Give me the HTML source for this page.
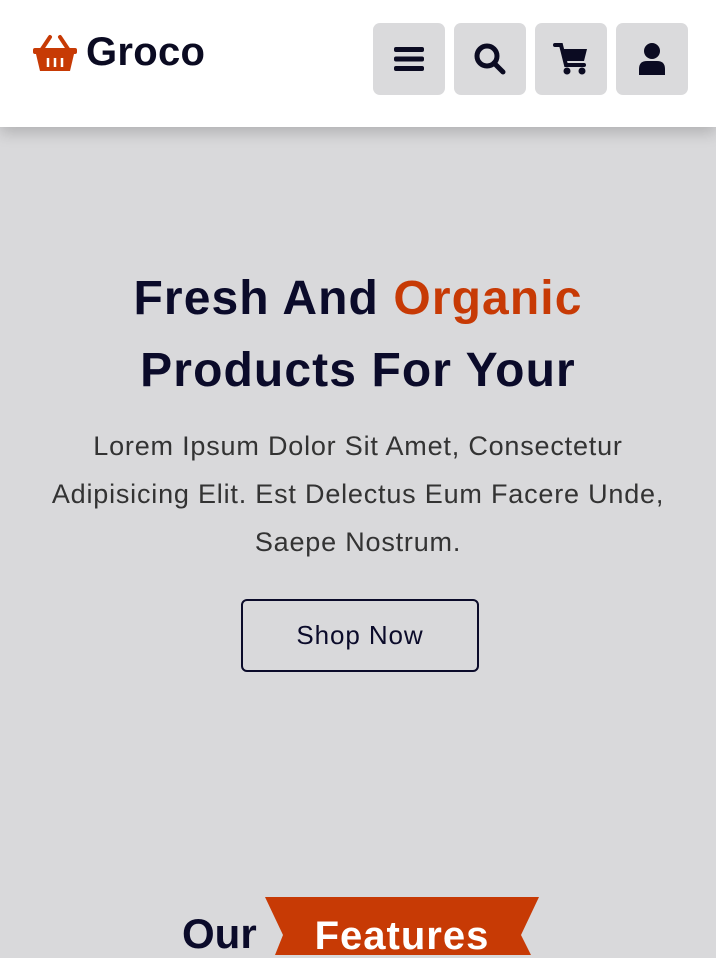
<!DOCTYPE html>
<html><head><meta charset="utf-8"><style>
*{margin:0;padding:0;box-sizing:border-box}
body{width:716px;height:955px;overflow:hidden;background:#d9d9db;font-family:"Liberation Sans",sans-serif;position:relative}
header{position:absolute;left:0;top:0;width:716px;height:127px;background:#fff;box-shadow:0 6px 14px rgba(0,0,0,.18)}
.logo{position:absolute;left:32px;top:30px;font-weight:bold;font-size:40px;color:#0b0b22;display:flex;align-items:center;gap:8px;letter-spacing:0.3px}
.btn{position:absolute;top:23px;width:72px;height:72px;background:#dadadc;border-radius:7px;display:flex;align-items:center;justify-content:center}
h1{position:absolute;top:263px;left:0;width:716px;text-align:center;font-size:48px;line-height:72px;color:#0b0b2a;font-weight:bold;letter-spacing:1.1px}
h1 span{color:#c73a05}
p{position:absolute;top:422px;left:30px;width:656px;text-align:center;font-size:27px;line-height:48px;color:#333;letter-spacing:0.8px}
.shop{position:absolute;left:241px;top:599px;width:238px;height:73px;border:2.5px solid #0b0b2a;border-radius:6px;font-size:26px;color:#0b0b2a;display:flex;align-items:center;justify-content:center;letter-spacing:0.9px}
.our{position:absolute;left:182px;top:910px;font-size:42px;font-weight:bold;color:#0b0b2a}
.feat{position:absolute;left:265px;top:897px}
</style></head><body>
<header>
<div class="logo"><svg width="46" height="40" viewBox="0 0 46 40"><path d="M10 16 L18 4 M36 16 L28 4" stroke="#c73a05" stroke-width="4" stroke-linecap="round"/><rect x="1" y="15" width="44" height="6" rx="2" fill="#c73a05"/><path d="M4 21 H42 L38 38 H8 Z" fill="#c73a05"/><path d="M16 25 V34 M23 25 V34 M30 25 V34" stroke="#fff" stroke-width="2.5"/></svg>Groco</div>
<div class="btn" style="left:373px"><svg width="30" height="26"><rect x="0" y="1" width="30" height="5" rx="2" fill="#0b0b22"/><rect x="0" y="10.5" width="30" height="5" rx="2" fill="#0b0b22"/><rect x="0" y="20" width="30" height="5" rx="2" fill="#0b0b22"/></svg></div>
<div class="btn" style="left:454px"><svg width="34" height="34"><circle cx="14" cy="14" r="10" stroke="#0b0b22" stroke-width="5" fill="none"/><path d="M21 21 L30 30" stroke="#0b0b22" stroke-width="5" stroke-linecap="round"/></svg></div>
<div class="btn" style="left:535px"><svg width="36" height="34"><path d="M2 3 H8 L13 23 H31" stroke="#0b0b22" stroke-width="4" fill="none" stroke-linecap="round"/><path d="M9 7 H34 L31 19 H12 Z" fill="#0b0b22"/><circle cx="14" cy="29" r="3.5" fill="#0b0b22"/><circle cx="29" cy="29" r="3.5" fill="#0b0b22"/></svg></div>
<div class="btn" style="left:616px"><svg width="30" height="34"><circle cx="15" cy="9" r="8" fill="#0b0b22"/><path d="M2 33 V27 Q2 19 10 19 H20 Q28 19 28 27 V33 Z" fill="#0b0b22"/></svg></div>
</header>
<h1>Fresh And <span>Organic</span><br>Products For Your</h1>
<p>Lorem Ipsum Dolor Sit Amet, Consectetur Adipisicing Elit. Est Delectus Eum Facere Unde, Saepe Nostrum.</p>
<div class="shop">Shop Now</div>
<div class="our">Our</div>
<svg class="feat" width="274" height="58"><path d="M0 0 H274 L256 38 L266 58 H10 L18 38 Z" fill="#c73a05"/><text x="137" y="52" text-anchor="middle" font-family="Liberation Sans" font-weight="bold" font-size="40" fill="#fff" letter-spacing="1">Features</text></svg>
</body></html>
